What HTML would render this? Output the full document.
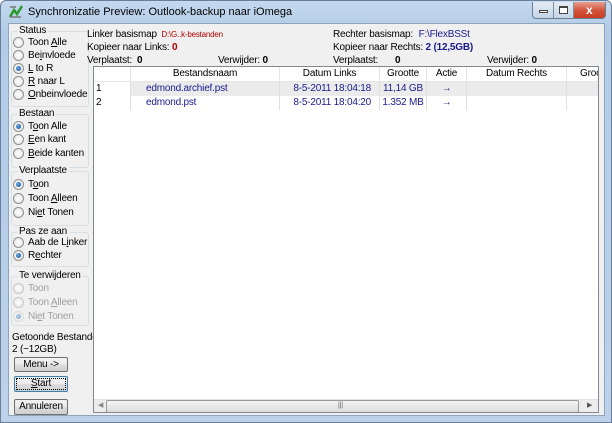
<!DOCTYPE html>
<html><head><meta charset="utf-8"><style>
*{margin:0;padding:0;box-sizing:border-box}
body{width:612px;height:423px;overflow:hidden;font-family:"Liberation Sans",sans-serif;font-size:10px;letter-spacing:-0.2px;color:#000;background:#fff}
div{white-space:nowrap}
.win{position:absolute;left:0;top:0;width:612px;height:423px;background:linear-gradient(#c4d9ef,#b3cbe6 30px,#bcd2ea);border:1px solid #6a7f99;border-radius:6px 6px 0 0}
.client{position:absolute;left:7px;top:22px;width:597px;height:393px;background:#f0f0f0;border:1px solid #8ea4bd}
.a{position:absolute}
.title{left:27px;top:5px;font-size:11px;letter-spacing:0}
.grp{position:absolute;border:1px solid #d5dfe5;border-radius:3px}
.gl{position:absolute;background:#f0f0f0;padding:0 2px;top:-7px;left:5px}
.r{position:absolute;width:11px;height:11px;border:1px solid #8e8f8f;border-radius:50%;background:radial-gradient(#fff,#e2e2e2)}
.r.on::after{content:"";position:absolute;left:2px;top:2px;width:5px;height:5px;border-radius:50%;background:radial-gradient(circle at 40% 40%,#6ab0f0,#0d3a7a)}
.dis{color:#a0a0a0}
.btn{position:absolute;width:54px;border:1px solid #707070;border-radius:2px;background:linear-gradient(#f2f2f2,#ebebeb 50%,#dddddd 51%,#cfcfcf);text-align:center}
.list{position:absolute;left:92px;top:65px;width:506px;height:347px;background:#fff;border:1px solid #828790;overflow:hidden}
.hd{position:absolute;top:0;height:15px;border-right:1px solid #e5e5e5;background:#fff;text-align:center;line-height:14px;border-bottom:1px solid #e5e5e5;overflow:hidden}
.cell{position:absolute;height:14px;line-height:14px;border-right:1px solid #e0e0e0;color:#1a1a8a;overflow:hidden}
u{text-decoration:underline}
</style></head><body>
<div class="win">
<svg class="a" style="left:7px;top:3px" width="16" height="16" viewBox="0 0 16 16"><path d="M2 13 L6 6 L9 10 L14 2" stroke="#2a9a2a" stroke-width="2.5" fill="none"/><path d="M2 3 L8 3 M2 13 L13 13" stroke="#777" stroke-width="1.5"/></svg>
<div class="a title">Synchronizatie Preview: Outlook-backup naar iOmega</div>
<div class="a" style="left:531px;top:1px;width:74px;height:17px;border:1px solid #6b7d93;border-top:none;border-radius:0 0 4px 4px;overflow:hidden;background:linear-gradient(#e4ecf5,#c5d5e7)">
 <div class="a" style="left:20px;top:0;width:1px;height:17px;background:#7d8ea3"></div>
 <div class="a" style="left:40px;top:0;width:1px;height:17px;background:#7d8ea3"></div>
 <div class="a" style="left:6px;top:8px;width:9px;height:3px;border:1px solid #444;background:#fff"></div>
 <div class="a" style="left:26px;top:4px;width:9px;height:8px;border:1px solid #444;border-top-width:2px;background:#fff"></div>
 <div class="a" style="left:41px;top:0;width:33px;height:17px;background:linear-gradient(#e8a08f,#d3513a 50%,#c63b20)"></div>
 <div class="a" style="left:53px;top:1px;color:#fff;font-weight:bold;font-size:12px">x</div>
</div>
<div class="client">
 <div class="grp" style="left:2px;top:7px;width:78px;height:76px"><div class="gl">Status</div></div>
 <div class="r" style="left:4px;top:13px"></div><div class="a" style="left:19px;top:13px">Toon <u>A</u>lle</div>
 <div class="r" style="left:4px;top:26px"></div><div class="a" style="left:19px;top:26px">Be<u>i</u>nvloede</div>
 <div class="r on" style="left:4px;top:39px"></div><div class="a" style="left:19px;top:39px"><u>L</u> to R</div>
 <div class="r" style="left:4px;top:52px"></div><div class="a" style="left:19px;top:52px"><u>R</u> naar L</div>
 <div class="r" style="left:4px;top:65px"></div><div class="a" style="left:19px;top:65px"><u>O</u>nbeinvloede</div>
 <div class="grp" style="left:2px;top:90px;width:78px;height:54px"><div class="gl">Bestaan</div></div>
 <div class="r on" style="left:4px;top:97px"></div><div class="a" style="left:19px;top:97px">T<u>o</u>on Alle</div>
 <div class="r" style="left:4px;top:110px"></div><div class="a" style="left:19px;top:110px"><u>E</u>en kant</div>
 <div class="r" style="left:4px;top:124px"></div><div class="a" style="left:19px;top:124px"><u>B</u>eide kanten</div>
 <div class="grp" style="left:2px;top:147px;width:78px;height:55px"><div class="gl">Verplaatste</div></div>
 <div class="r on" style="left:4px;top:155px"></div><div class="a" style="left:19px;top:155px">T<u>o</u>on</div>
 <div class="r" style="left:4px;top:169px"></div><div class="a" style="left:19px;top:169px">Toon <u>A</u>lleen</div>
 <div class="r" style="left:4px;top:183px"></div><div class="a" style="left:19px;top:183px">Ni<u>e</u>t Tonen</div>
 <div class="grp" style="left:2px;top:208px;width:78px;height:35px"><div class="gl">Pas ze aan</div></div>
 <div class="r" style="left:4px;top:213px"></div><div class="a" style="left:19px;top:213px">Aab de L<u>i</u>nker</div>
 <div class="r on" style="left:4px;top:226px"></div><div class="a" style="left:19px;top:226px">R<u>e</u>chter</div>
 <div class="grp" style="left:2px;top:252px;width:78px;height:50px"><div class="gl">Te verwijderen</div></div>
 <div class="r" style="left:4px;top:259px;border-color:#c8c8c8"></div><div class="a dis" style="left:19px;top:259px">Toon</div>
 <div class="r" style="left:4px;top:273px;border-color:#c8c8c8"></div><div class="a dis" style="left:19px;top:273px">Toon <u>A</u>lleen</div>
 <div class="r on" style="left:4px;top:287px;border-color:#c8c8c8;opacity:.45"></div><div class="a dis" style="left:19px;top:287px">Ni<u>e</u>t Tonen</div>
 <div class="a" style="left:3px;top:308px">Getoonde Bestanden:</div>
 <div class="a" style="left:3px;top:320px">2 (~12GB)</div>
 <div class="btn" style="left:5px;top:333px;height:15px;line-height:13px">Menu -&gt;</div>
 <div class="btn" style="left:5px;top:352px;height:16px;line-height:14px;border-color:#3c7fb1;outline:1px dotted #000;outline-offset:-3px"><u>S</u>tart</div>
 <div class="btn" style="left:5px;top:375px;height:16px;line-height:14px">Annuleren</div>
 <div class="a" style="left:78px;top:5px">Linker basismap <span style="color:#b00000;font-size:8px;margin-left:2px">D:\G..k-bestanden</span></div>
 <div class="a" style="left:78px;top:18px">Kopieer naar Links: <b style="color:#b00000">0</b></div>
 <div class="a" style="left:78px;top:31px">Verplaatst:</div><div class="a" style="left:128px;top:31px"><b>0</b></div>
 <div class="a" style="left:209px;top:31px">Verwijder: <b>0</b></div>
 <div class="a" style="left:324px;top:5px">Rechter basismap: <span style="color:#1a1a8a;margin-left:3px">F:\FlexBSSt</span></div>
 <div class="a" style="left:324px;top:18px">Kopieer naar Rechts: <b style="color:#1a1a8a">2 (12,5GB)</b></div>
 <div class="a" style="left:324px;top:31px">Verplaatst:</div><div class="a" style="left:386px;top:31px"><b>0</b></div>
 <div class="a" style="left:478px;top:31px">Verwijder: <b>0</b></div>
</div>
<div class="list">
 <div class="hd" style="left:0;width:37px"></div>
 <div class="hd" style="left:37px;width:149px">Bestandsnaam</div>
 <div class="hd" style="left:186px;width:100px">Datum Links</div>
 <div class="hd" style="left:286px;width:47px">Grootte</div>
 <div class="hd" style="left:333px;width:40px">Actie</div>
 <div class="hd" style="left:373px;width:100px">Datum Rechts</div>
 <div class="hd" style="left:473px;width:40px;text-align:left;padding-left:13px">Groott</div>
 <div class="a" style="left:37px;top:15px;width:470px;height:14px;background:#ebebeb"></div>
 <div class="cell" style="left:2px;top:15px;width:35px;color:#000">1</div>
 <div class="cell" style="left:37px;top:15px;width:149px;padding-left:15px">edmond.archief.pst</div>
 <div class="cell" style="left:186px;top:15px;width:100px;text-align:right;padding-right:8px">8-5-2011 18:04:18</div>
 <div class="cell" style="left:286px;top:15px;width:47px;text-align:center">11,14 GB</div>
 <div class="cell" style="left:333px;top:15px;width:40px;text-align:center;font-weight:bold">&#8594;</div>
 <div class="cell" style="left:373px;top:15px;width:100px"></div>
 <div class="cell" style="left:473px;top:15px;width:40px"></div>
 <div class="cell" style="left:2px;top:29px;width:35px;color:#000">2</div>
 <div class="cell" style="left:37px;top:29px;width:149px;padding-left:15px">edmond.pst</div>
 <div class="cell" style="left:186px;top:29px;width:100px;text-align:right;padding-right:8px">8-5-2011 18:04:20</div>
 <div class="cell" style="left:286px;top:29px;width:47px;text-align:center">1.352 MB</div>
 <div class="cell" style="left:333px;top:29px;width:40px;text-align:center;font-weight:bold">&#8594;</div>
 <div class="cell" style="left:373px;top:29px;width:100px"></div>
 <div class="cell" style="left:473px;top:29px;width:40px"></div>
 <div class="a" style="left:0;top:332px;width:504px;height:14px;background:#ececec;border-top:1px solid #e0e0e0"></div>
 <div class="a" style="left:4px;top:334px;font-size:7px;color:#888">&#9664;</div>
 <div class="a" style="left:12px;top:333px;width:473px;height:13px;border:1px solid #999;border-radius:2px;background:linear-gradient(#f4f4f4,#dcdcdc)"></div>
 <div class="a" style="left:244px;top:335px;font-size:7px;color:#666">|||</div>
 <div class="a" style="left:493px;top:334px;font-size:7px;color:#555">&#9654;</div>
</div>
</div>
</body></html>
